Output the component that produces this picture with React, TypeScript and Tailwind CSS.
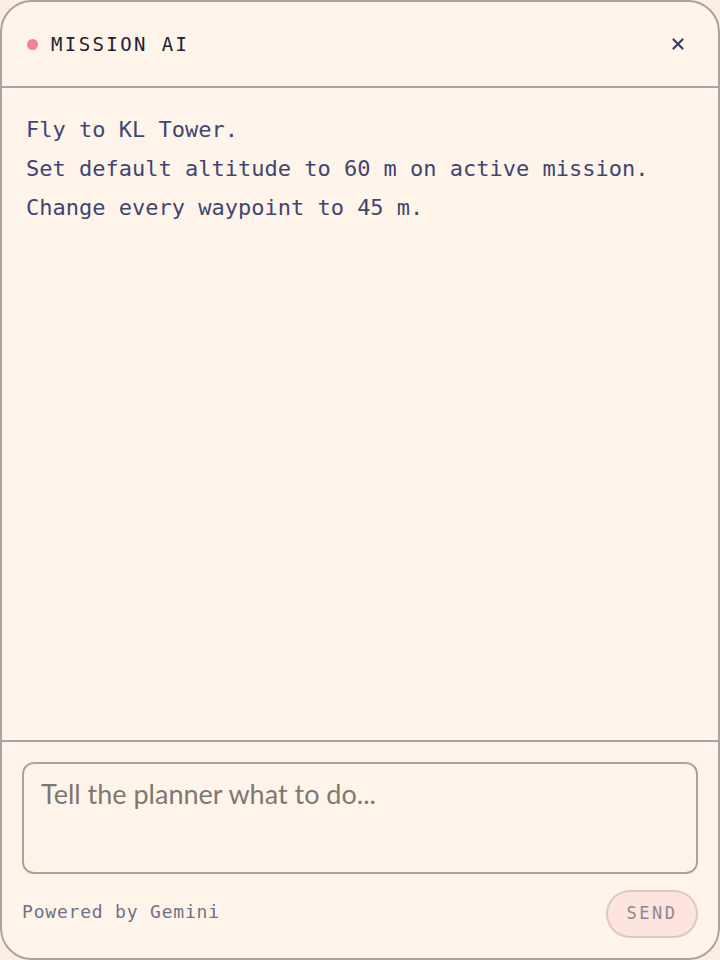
import React from "react";

const mono = { fontFamily: '"DejaVu Sans Mono", "Liberation Mono", monospace' };

export default function App() {
  const lines = [
    "Fly to KL Tower.",
    "Set default altitude to 60 m on active mission.",
    "Change every waypoint to 45 m.",
  ];
  return (
    <div className="w-[720px] h-[960px] bg-[#fdeee2]">
      <div
        className="w-full h-full flex flex-col bg-[#fff4e9] border-2 border-[#aaa3a3] rounded-[32px] overflow-hidden"
        style={mono}
      >
        <header className="h-[86px] shrink-0 flex items-center justify-between pl-[25px] pr-[34px] border-b-2 border-[#aaa3a3]">
          <div className="flex items-center gap-[13px]">
            <span className="w-[11px] h-[11px] rounded-full bg-[#f77f9b]" />
            <span className="text-[19px] tracking-[2.4px] text-[#1e2232]">MISSION AI</span>
          </div>
          <button className="text-[#36406a]">
            <svg width="12" height="12" viewBox="0 0 12 12">
              <path d="M1.5 1.5 L10.5 10.5 M10.5 1.5 L1.5 10.5" stroke="currentColor" strokeWidth="2.2" strokeLinecap="round" />
            </svg>
          </button>
        </header>
        <main className="flex-1 flex flex-col gap-[6px] px-[24px] pt-[25px] text-[22px] leading-[33px] text-[#3f4670]">
          {lines.map((l) => (
            <p key={l}>{l}</p>
          ))}
        </main>
        <footer className="shrink-0 border-t-2 border-[#aaa3a3] px-[20px] pt-[20px] pb-[20px]">
          <div className="h-[112px] rounded-[12px] border-2 border-[#aaa3a3] px-[17px] pt-[10px]">
            <span
              className="text-[27px] text-[#7d7873]"
              style={{ fontFamily: 'Lato, "Noto Sans", sans-serif' }}
            >
              Tell the planner what to do...
            </span>
          </div>
          <div className="flex items-center justify-between mt-[16px]">
            <span className="text-[18px] leading-[24px] pb-[4px] text-[#6d7288] tracking-[0.8px]">Powered by Gemini</span>
            <button className="h-[48px] w-[92px] rounded-full border-2 border-[#dcc9c6] bg-[#fde4df] text-[17px] tracking-[2.5px] text-[#8d8890]">
              SEND
            </button>
          </div>
        </footer>
      </div>
    </div>
  );
}
